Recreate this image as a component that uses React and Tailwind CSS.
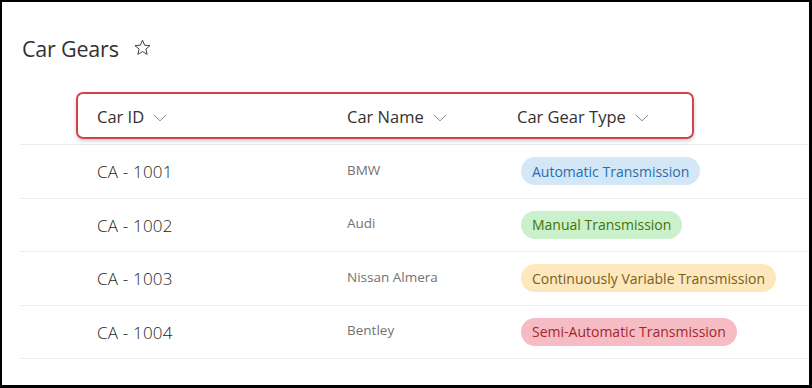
import React from "react";

const rows = [
  { id: "CA - 1001", name: "BMW", gear: "Automatic Transmission", pill: "bg-[#d4e7f6] text-[#2a6cb0]" },
  { id: "CA - 1002", name: "Audi", gear: "Manual Transmission", pill: "bg-[#caf0cc] text-[#437406]" },
  { id: "CA - 1003", name: "Nissan Almera", gear: "Continuously Variable Transmission", pill: "bg-[#fde7bd] text-[#79601a]" },
  { id: "CA - 1004", name: "Bentley", gear: "Semi-Automatic Transmission", pill: "bg-[#f6bcc4] text-[#a4262c]" },
];

const Chevron = () => (
  <svg width="14" height="8" viewBox="0 0 14 8" className="ml-[9px] mt-[1px]">
    <path d="M0.8 1 L7 6.8 L13.2 1" fill="none" stroke="#8a8886" strokeWidth="1" />
  </svg>
);

const Star = () => (
  <svg width="19" height="19" viewBox="0 0 24 24">
    <path
      d="M12 2.8 L14.7 9.1 L21.5 9.6 L16.3 14 L17.9 20.7 L12 17.1 L6.1 20.7 L7.7 14 L2.5 9.6 L9.3 9.1 Z"
      fill="none"
      stroke="#3b3a39"
      strokeWidth="1.2"
      strokeLinejoin="round"
    />
  </svg>
);

const App = () => {
  return (
    <div
      className="w-[812px] h-[388px] bg-white border-l-2 border-t-2 border-r-[3px] border-b-[3px] border-black overflow-hidden"
      style={{ fontFamily: '"Open Sans", "Noto Sans", sans-serif' }}
    >
      {/* title */}
      <div className="flex items-center h-[34px] mt-[30px] pl-[20px]">
        <h1 className="text-[21.5px] text-[#323130] tracking-[-0.2px]">Car Gears</h1>
        <span className="ml-[14px] mt-[-3px]">
          <Star />
        </span>
      </div>

      {/* header */}
      <div className="ml-[18px] mt-[26px] h-[53px] border-b border-[#edebe9]">
        <div className="ml-[56px] w-[618px] h-[47px] rounded-[7px] border-2 border-[#d0454c] shadow-[0_2px_4px_rgba(0,0,0,0.2)] grid grid-cols-[250px_170px_1fr] items-center pl-[19px] pt-[3px]">
          <div className="flex items-center text-[16.5px] text-[#323130]">
            Car ID <Chevron />
          </div>
          <div className="flex items-center text-[16.5px] text-[#323130]">
            Car Name <Chevron />
          </div>
          <div className="flex items-center text-[16.5px] text-[#323130]">
            Car Gear Type <Chevron />
          </div>
        </div>
      </div>

      {/* rows */}
      <div className="ml-[18px]">
        {rows.map((r) => (
          <div
            key={r.id}
            className="h-[53.5px] border-b border-[#edebe9] grid grid-cols-[250px_174px_1fr] items-center pl-[77px]"
          >
            <div className="text-[17px] font-light text-[#201f1e] mt-[1px] tracking-[0.2px]">{r.id}</div>
            <div className="text-[13.5px] text-[#737271] mt-[-3px]">{r.name}</div>
            <div>
              <span className={`inline-flex items-center h-[28px] px-[11px] rounded-full text-[14px] ${r.pill}`}>
                {r.gear}
              </span>
            </div>
          </div>
        ))}
      </div>
    </div>
  );
};

export default App;
